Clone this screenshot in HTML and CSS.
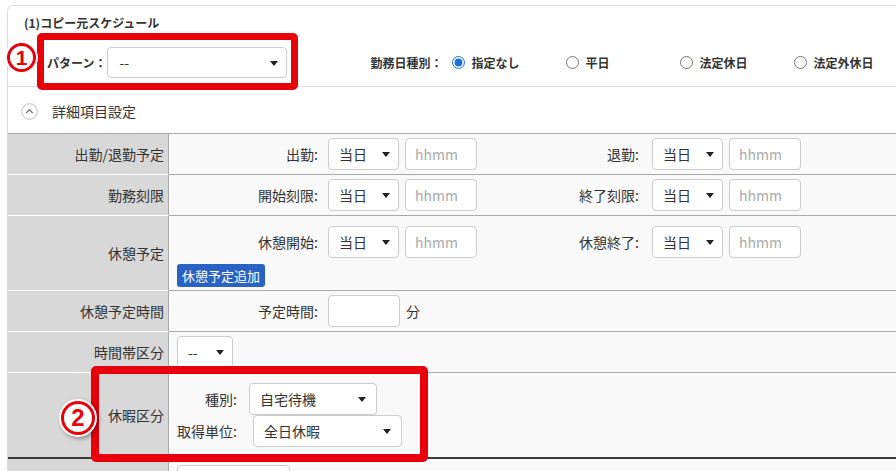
FILE: index.html
```html
<html>
	<head>
		<title>コピー元スケジュール</title>
		<link rel="stylesheet" href="styles.css">
	</head>
	<body>
		<div class="page">
			<div class="panel">
				<div class="title">(1)コピー元スケジュール</div>
				<div class="patternWrap">
					<div class="patternRow">
						<span class="boldLabel">パターン：</span>
						<div class="sel selPattern">
							<select><option>--</option></select>
						</div>
						<div class="dayType">
							<span class="boldLabel">勤務日種別：</span>
							<label class="opt"><input type="radio" name="dayType" checked>指定なし</label>
							<label class="opt"><input type="radio" name="dayType">平日</label>
							<label class="opt"><input type="radio" name="dayType">法定休日</label>
							<label class="opt"><input type="radio" name="dayType">法定外休日</label>
						</div>
					</div>
				</div>
				<div class="detail">
					<svg class="detailIcon" width="17" height="17" viewBox="0 0 17 17">
						<circle cx="8.5" cy="8.5" r="7.8" fill="#fff" stroke="#bdbdbd" stroke-width="1"/>
						<path d="M5.3 10 L8.5 6.8 L11.7 10" fill="none" stroke="#777" stroke-width="1.4"/>
					</svg>
					<span>詳細項目設定</span>
				</div>
				<div class="grid">
					<div class="row">
						<div class="th">出勤/退勤予定</div>
						<div class="td">
							<span class="fl fl1">出勤:</span>
							<div class="sel selDay"><select><option>当日</option></select></div>
							<input class="hhmm" type="text" placeholder="hhmm">
							<span class="fl fl2">退勤:</span>
							<div class="sel selDay"><select><option>当日</option></select></div>
							<input class="hhmm" type="text" placeholder="hhmm">
						</div>
					</div>
					<div class="row">
						<div class="th">勤務刻限</div>
						<div class="td">
							<span class="fl fl1">開始刻限:</span>
							<div class="sel selDay"><select><option>当日</option></select></div>
							<input class="hhmm" type="text" placeholder="hhmm">
							<span class="fl fl2">終了刻限:</span>
							<div class="sel selDay"><select><option>当日</option></select></div>
							<input class="hhmm" type="text" placeholder="hhmm">
						</div>
					</div>
					<div class="row">
						<div class="th">休憩予定</div>
						<div class="td tdStack tdBreak">
							<div class="line">
								<span class="fl fl1">休憩開始:</span>
								<div class="sel selDay"><select><option>当日</option></select></div>
								<input class="hhmm" type="text" placeholder="hhmm">
								<span class="fl fl2">休憩終了:</span>
								<div class="sel selDay"><select><option>当日</option></select></div>
								<input class="hhmm" type="text" placeholder="hhmm">
							</div>
							<a class="addButton">休憩予定追加</a>
						</div>
					</div>
					<div class="row">
						<div class="th">休憩予定時間</div>
						<div class="td">
							<span class="fl fl1">予定時間:</span>
							<input class="hhmm" type="text">
							<span class="unit">分</span>
						</div>
					</div>
					<div class="row">
						<div class="th">時間帯区分</div>
						<div class="td">
							<div class="sel selShort"><select><option>--</option></select></div>
						</div>
					</div>
					<div class="row rowLast">
						<div class="th">休暇区分</div>
						<div class="td tdStack tdLeave">
							<div class="line">
								<span class="fl flKind">種別:</span>
								<div class="sel selKind"><select><option>自宅待機</option></select></div>
							</div>
							<div class="line">
								<span class="fl flUnit">取得単位:</span>
								<div class="sel selUnit"><select><option>全日休暇</option></select></div>
							</div>
						</div>
					</div>
					<div class="row">
						<div class="th"></div>
						<div class="td tdNext">
							<input class="wideInput" type="text">
						</div>
					</div>
				</div>
			</div>
			<div class="markBox markBox1"></div>
			<div class="markBox markBox2"></div>
			<div class="markNum markNum1">1</div>
			<div class="markNum markNum2">2</div>
		</div>
	</body>
</html>
```
FILE: styles.css
```css
			*
			{
				box-sizing: border-box;
			}
			body
			{
				margin: 0;
				background-color: #ffffff;
				color: #333333;
				font-family: "Noto Sans CJK JP", "Noto Sans", sans-serif;
				overflow: hidden;
			}
			.page
			{
				position: relative;
				width: 896px;
				height: 471px;
				overflow: hidden;
			}
			.panel
			{
				margin: 5px 0 0 7px;
				width: 960px;
				border: 1px solid #dcdcdc;
				border-right: none;
				border-radius: 6px 0 0 0;
			}
			.title
			{
				padding: 7px 0 0 16px;
				font-size: 12px;
				font-weight: bold;
				line-height: 20px;
			}
			.patternWrap
			{
				padding-bottom: 8px;
				border-bottom: 1px solid #dcdcdc;
			}
			.patternRow
			{
				display: flex;
				align-items: center;
				height: 32px;
				margin-top: 13px;
				padding-left: 39px;
			}
			.boldLabel
			{
				font-size: 12px;
				font-weight: bold;
				white-space: nowrap;
			}
			.dayType
			{
				display: flex;
				align-items: center;
				margin-left: 83px;
			}
			.dayType .boldLabel
			{
				margin-right: 10px;
			}
			.opt
			{
				display: flex;
				align-items: center;
				width: 114px;
				font-size: 12px;
				font-weight: bold;
				white-space: nowrap;
			}
			.opt input
			{
				width: 13px;
				height: 13px;
				margin: 0 6px 0 0;
				accent-color: #1a6fd6;
			}
			.detail
			{
				display: flex;
				align-items: center;
				height: 46px;
				padding: 2px 0 0 13px;
				font-size: 14px;
			}
			.detailIcon
			{
				margin-right: 14px;
			}
			.grid
			{
				border-top: 1px solid #a9a9a9;
			}
			.row
			{
				display: flex;
			}
			.th
			{
				display: flex;
				align-items: center;
				justify-content: flex-end;
				width: 161px;
				padding-right: 4px;
				background-color: #d8d8d8;
				border-right: 1px solid #a9a9a9;
				border-bottom: 1px solid #ffffff;
				font-size: 14px;
				white-space: nowrap;
			}
			.td
			{
				flex: 1;
				display: flex;
				align-items: center;
				padding: 4px 8px;
				background-color: #f9f9f9;
				border-bottom: 1px solid #a9a9a9;
				font-size: 14px;
			}
			.tdStack
			{
				flex-direction: column;
				align-items: flex-start;
			}
			.tdBreak
			{
				padding: 10px 8px 3px 8px;
			}
			.tdLeave
			{
				padding: 10px 8px;
			}
			.rowLast .th, .rowLast .td
			{
				border-bottom: 2px solid #3a3a3a;
			}
			.tdNext
			{
				align-items: flex-start;
				padding-top: 6px;
				height: 40px;
			}
			.line
			{
				display: flex;
				align-items: center;
			}
			.fl
			{
				text-align: right;
				white-space: nowrap;
			}
			.fl1
			{
				width: 151px;
				padding-right: 10px;
			}
			.fl2
			{
				width: 175px;
				padding-right: 13px;
			}
			.flKind
			{
				width: 72px;
				padding-right: 12px;
			}
			.flUnit
			{
				width: 76px;
				padding-right: 16px;
			}
			.sel
			{
				position: relative;
				height: 32px;
			}
			.sel select
			{
				appearance: none;
				width: 100%;
				height: 100%;
				padding: 0 0 0 10px;
				background-color: #ffffff;
				border: 1px solid #cccccc;
				border-radius: 4px;
				color: #333333;
				font-family: inherit;
				font-size: 14px;
			}
			.sel:after
			{
				content: "";
				position: absolute;
				top: 14px;
				right: 9px;
				border-left: 4px solid transparent;
				border-right: 4px solid transparent;
				border-top: 5px solid #222222;
			}
			.selPattern
			{
				width: 180px;
				height: 31px;
				margin-left: 1px;
			}
			.selPattern select
			{
				padding-left: 11px;
			}
			.selDay
			{
				width: 71px;
				margin-right: 6px;
			}
			.selShort
			{
				width: 56px;
			}
			.selKind
			{
				width: 128px;
			}
			.selUnit
			{
				width: 149px;
			}
			.selKind:after, .selUnit:after
			{
				right: 11px;
			}
			.hhmm
			{
				width: 72px;
				height: 32px;
				padding: 0 0 0 9px;
				background-color: #ffffff;
				border: 1px solid #cccccc;
				border-radius: 4px;
				font-family: inherit;
				font-size: 14px;
				color: #333333;
			}
			.hhmm::placeholder
			{
				color: #aaaaaa;
			}
			.wideInput
			{
				width: 113px;
				height: 32px;
				background-color: #ffffff;
				border: 1px solid #cccccc;
				border-radius: 4px;
			}
			.unit
			{
				margin-left: 6px;
			}
			.addButton
			{
				display: inline-block;
				height: 23px;
				margin-top: 6px;
				padding: 0 5px;
				background-color: #2a62c4;
				border-radius: 3px;
				color: #ffffff;
				font-size: 13px;
				line-height: 23px;
				cursor: pointer;
			}
			.markBox
			{
				position: absolute;
				border: 7px solid #e8000b;
				border-radius: 5px;
			}
			.markBox1
			{
				left: 37px;
				top: 33px;
				width: 261px;
				height: 57px;
			}
			.markBox2
			{
				left: 91px;
				top: 366px;
				width: 337px;
				height: 96px;
				border-width: 8px;
			}
			.markNum
			{
				position: absolute;
				display: flex;
				align-items: center;
				justify-content: center;
				background-color: #ffffff;
				border: 3px solid #e8000b;
				border-radius: 50%;
				color: #e8000b;
				font-family: "Liberation Sans", sans-serif;
				font-weight: bold;
				box-shadow: 0 0 0 2px #ffffff;
			}
			.markNum1
			{
				left: 7px;
				top: 43px;
				width: 29px;
				height: 29px;
				font-size: 21px;
			}
			.markNum2
			{
				left: 61px;
				top: 401px;
				width: 34px;
				height: 34px;
				font-size: 24px;
				box-shadow: 0 0 0 2px #ffffff, 2px 2px 4px 2px rgba(0, 0, 0, 0.35);
			}
```
